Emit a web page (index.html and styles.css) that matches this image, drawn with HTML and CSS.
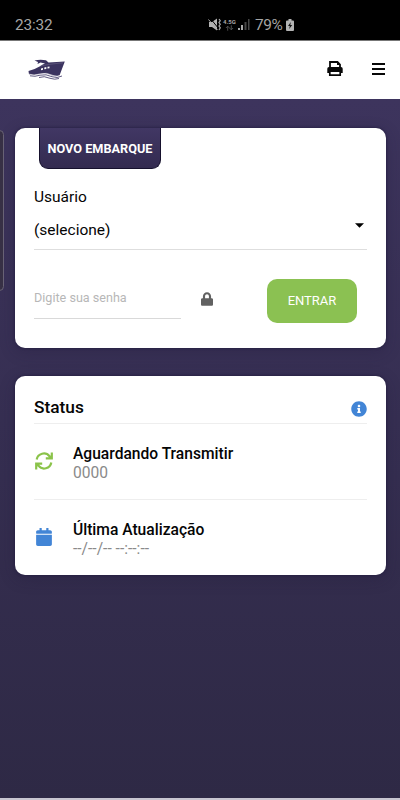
FILE: index.html
```html
<!DOCTYPE html>
<html lang="pt-BR">
<head>
<meta charset="utf-8">
<meta name="viewport" content="width=device-width, initial-scale=1">
<title>Novo Embarque</title>
<link rel="stylesheet" href="styles.css">
</head>
<body>
<div class="statusbar">
  <span class="clock">23:32</span>
  <div class="indicators">
    <svg class="mute" viewBox="0 0 13 13"><path d="M1 4h3l5-3.500v12L4 9H1z" fill="#b4b4b4"/><path d="M2 0l9 11" stroke="#000" stroke-width="1"/><path d="M0.500 1.500l9 10.500" stroke="#aaa"/><path d="M11 1l1.300 1.700L11 4.500l1.300 1.800L11 8l1.300 1.800L11 12" stroke="#aaa" stroke-width="1.200" fill="none"/></svg>
    <div class="network"><span>4.5G</span><svg viewBox="0 0 10 6"><path d="M3 6V1M1 3l2-2 2 2M7 0v5M5 3l2 2 2-2" stroke="#555" fill="none"/></svg></div>
    <svg class="signal" viewBox="0 0 12 11"><path d="M0 9h2v2H0zM3 6h2v5H3z" fill="#aaa"/><path d="M6.500 3h2v8h-2zM10 0h1.500v11H10z" fill="#474747"/></svg>
    <span class="percent">79%</span>
    <svg class="battery" viewBox="0 0 8 12"><path d="M2.500 0h3v1.500H7a1 1 0 0 1 1 1V11a1 1 0 0 1-1 1H1a1 1 0 0 1-1-1V2.500a1 1 0 0 1 1-1h1.500z" fill="#b4b4b4"/><path d="M4.800 3L2 7h1.800l-.6 3L6.200 6H4.300z" fill="#111"/></svg>
  </div>
</div>
<header class="header">
  <svg class="logo" viewBox="0 0 38 21"><path d="M6.500 1.600Q12 0 18 1.300L20.500 3.500 36.800 2.500 31.500 16.500Q28 18 24 16.500 18 13.500 12 15 6 16.500 1 15.500L.5 12Q7 10.300 12 7.200 14 5.500 17 4.500L12.500 3.600 9.500 5.100 10 3z" fill="#3b3360"/><path d="M12.500 7.100Q20 5.200 35 3.800" stroke="#77708f" stroke-width=".5" fill="none"/><path d="M13 9.500l2-.6v1.800l-2 .5zM16.300 8.600l2-.5v1.800l-2 .4zM19.500 7.800l2-.4v1.800l-2 .4z" fill="#fff"/><path d="M1 15.200Q6 17 12 15 18 13 25 16.500 29 18 33 16.500" stroke="#fff" stroke-width=".7" fill="none"/><path d="M2 16.800Q7 18 12 16.200 18 14.700 24 17.700 29 19.700 34 17M11 18.500Q16 16.500 22 19.300 27 21 31 19.500" stroke="#514976" stroke-width=".9" fill="none"/></svg>
  <div class="tools">
    <svg class="print" viewBox="0 0 16 15"><path d="M3 7V1h7.500L13 3.500V7" fill="none" stroke="#080808" stroke-width="1.800"/><path d="M10 1v3h3" fill="#080808"/><path d="M2 6h12a1.700 1.700 0 0 1 1.700 1.700V12H.3V7.700A1.700 1.700 0 0 1 2 6z" fill="#080808"/><path d="M2.800 10.200h10.400v3.900H2.800z" fill="#fff" stroke="#080808" stroke-width="1.700"/></svg>
    <svg class="menu" viewBox="0 0 13 12"><path d="M0 1h13M0 6h13M0 11h13" stroke="#080808" stroke-width="1.800"/></svg>
  </div>
</header>
<main class="page">
  <div class="edge-handle"></div>
  <section class="card login">
    <h1 class="tab">NOVO EMBARQUE</h1>
    <label class="user-label">Usuário</label>
    <div class="select"><span>(selecione)</span><svg viewBox="0 0 10 5"><path d="M0 0h10L5 5z" fill="#000"/></svg></div>
    <div class="login-row">
      <div class="password">Digite sua senha</div>
      <svg class="lock" viewBox="0 0 448 512"><path fill="#616161" d="M400 224h-24v-72C376 68.200 307.800 0 224 0S72 68.200 72 152v72H48c-26.500 0-48 21.500-48 48v192c0 26.500 21.500 48 48 48h352c26.500 0 48-21.500 48-48V272c0-26.500-21.500-48-48-48zm-104 0H152v-72c0-39.700 32.300-72 72-72s72 32.300 72 72v72z"/></svg>
      <button class="enter">ENTRAR</button>
    </div>
  </section>
  <section class="card status">
    <div class="status-head"><h2>Status</h2><svg viewBox="0 0 512 512"><path fill="#4285d6" d="M256 8C119 8 8 119.100 8 256c0 137 111 248 248 248s248-111 248-248C504 119.100 393 8 256 8zm0 110c23.200 0 42 18.800 42 42s-18.800 42-42 42-42-18.800-42-42 18.800-42 42-42zm56 254c0 6.600-5.400 12-12 12h-88c-6.600 0-12-5.400-12-12v-24c0-6.600 5.400-12 12-12h12v-64h-12c-6.600 0-12-5.400-12-12v-24c0-6.600 5.400-12 12-12h64c6.600 0 12 5.400 12 12v100h12c6.600 0 12 5.400 12 12z"/></svg></div>
    <div class="item">
      <svg class="sync" viewBox="0 0 18 18"><g fill="none" stroke="#8bc34a" stroke-width="2.200"><path d="M1.700 7.500A7.200 7.200 0 0 1 14.500 4.300L15.500 5.300M10.800 6.400H16.800V.5"/><path transform="rotate(180 9 9)" d="M1.700 7.500A7.200 7.200 0 0 1 14.500 4.300L15.500 5.300M10.800 6.400H16.800V.5"/></g><path fill="#8bc34a" d="M17 2.500V7h-4.500zM1 15.500V11h4.500z"/></svg>
      <div><h3>Aguardando Transmitir</h3><p>0000</p></div>
    </div>
    <div class="item">
      <svg class="calendar" viewBox="0 0 448 512"><path fill="#4285d6" d="M12 192h424c6.600 0 12 5.400 12 12v260c0 26.500-21.500 48-48 48H48c-26.500 0-48-21.500-48-48V204c0-6.600 5.400-12 12-12zm436-44v-36c0-26.500-21.500-48-48-48h-48V12c0-6.600-5.400-12-12-12h-40c-6.600 0-12 5.400-12 12v52H160V12c0-6.600-5.400-12-12-12h-40c-6.600 0-12 5.400-12 12v52H48c-26.500 0-48 21.500-48 48v36c0 6.600 5.400 12 12 12h424c6.600 0 12-5.400 12-12z"/></svg>
      <div><h3>Última Atualização</h3><p class="date">--/--/-- --:--:--</p></div>
    </div>
  </section>
</main>
</body>
</html>
```
FILE: styles.css
```css
* { box-sizing: border-box; }
body { margin: 0; height: 800px; display: flex; flex-direction: column; overflow: hidden; font-family: Roboto, sans-serif; color: #050505; background: #c8c6d0; }
h1, h2, h3, p { margin: 0; }
svg { display: block; flex-shrink: 0; }
.statusbar { height: 41px; flex-shrink: 0; background: #000; border-bottom: 1px solid #777; display: flex; justify-content: space-between; padding: 9px 106px 0 15px; color: #a6a6a6; }
.clock { font-size: 15.4px; line-height: 32px; letter-spacing: -.15px; }
.indicators { display: flex; align-items: center; height: 31px; }
.mute { width: 13px; height: 13px; }
.network { width: 14px; margin-left: 2px; font-size: 6px; line-height: 6px; font-weight: 700; }
.network svg { width: 9px; height: 6px; margin-left: 2px; }
.signal { width: 12px; height: 11px; margin-left: 1px; }
.percent { margin-left: 5px; width: 27px; font-size: 15.4px; line-height: 32px; letter-spacing: -.4px; white-space: nowrap; }
.battery { width: 8px; height: 12px; margin-left: 4px; }
.header { height: 58px; flex-shrink: 0; background: #fff; display: flex; align-items: center; justify-content: space-between; padding: 0 15px 3px 28px; }
.logo { width: 38px; height: 21px; margin-top: 2px; }
.tools { display: flex; align-items: center; gap: 29px; }
.print { width: 16px; height: 15px; }
.menu { width: 13px; height: 12px; }
.page { position: relative; height: 699px; flex: none; background: linear-gradient(#3d345d, #2e2945); padding: 29px 14px 0 15px; }
.edge-handle { position: absolute; left: -5px; top: 31px; width: 9px; height: 161px; border: 1px solid #686275; border-radius: 5px; background: #373045; }
.card { background: #fff; border-radius: 10px; padding: 0 19px; box-shadow: 0 0 3px #211b3d, 0 4px 15px #211b3d4d; }
.login { height: 220px; }
.tab { width: 122px; height: 41px; margin-left: 5px; background: linear-gradient(#413764, #332b50); border: solid #16112d; border-width: 0 1px 1px; border-radius: 0 0 9px 9px; color: #fff; font-size: 12.7px; font-weight: 700; line-height: 41px; text-align: center; white-space: nowrap; }
.user-label { display: block; height: 34px; margin-top: 10px; font-size: 15.5px; line-height: 36px; }
.select { height: 37px; border-bottom: 1px solid #dedede; display: flex; justify-content: space-between; padding-right: 3px; font-size: 15.5px; line-height: 35px; }
.select svg { width: 9px; height: 5px; margin-top: 10px; }
.login-row { display: flex; padding-top: 29px; }
.password { width: 147px; height: 40px; border-bottom: 1px solid #d9d9d9; color: #b7b7b7; font-size: 12.6px; line-height: 38px; }
.lock { width: 12px; height: 14px; margin: 13px 0 0 20px; }
.enter { width: 90px; height: 44px; margin: 0 0 0 54px; border: 0; border-radius: 10px; background: #8bc152; color: #fff; font: 13px/44px Roboto, sans-serif; padding: 0; }
.status { height: 199px; margin-top: 28px; }
.status-head { height: 48px; display: flex; justify-content: space-between; border-bottom: 1px solid #eee; }
.status-head h2 { font-size: 17.3px; font-weight: 500; line-height: 62px; }
.status-head svg { width: 16px; height: 16px; margin-top: 25px; }
.item { height: 76px; display: flex; border-bottom: 1px solid #eee; padding-top: 20px; }
.item:last-child { border-bottom: 0; }
.item h3 { font-size: 15.6px; line-height: 21px; font-weight: 500; }
.item p { font-size: 15.6px; line-height: 17px; color: #8a8a8a; }
.sync { width: 18px; height: 18px; margin: 8px 20px 0 1px; }
.calendar { width: 16px; height: 18px; margin: 8px 21px 0 2px; }
```
